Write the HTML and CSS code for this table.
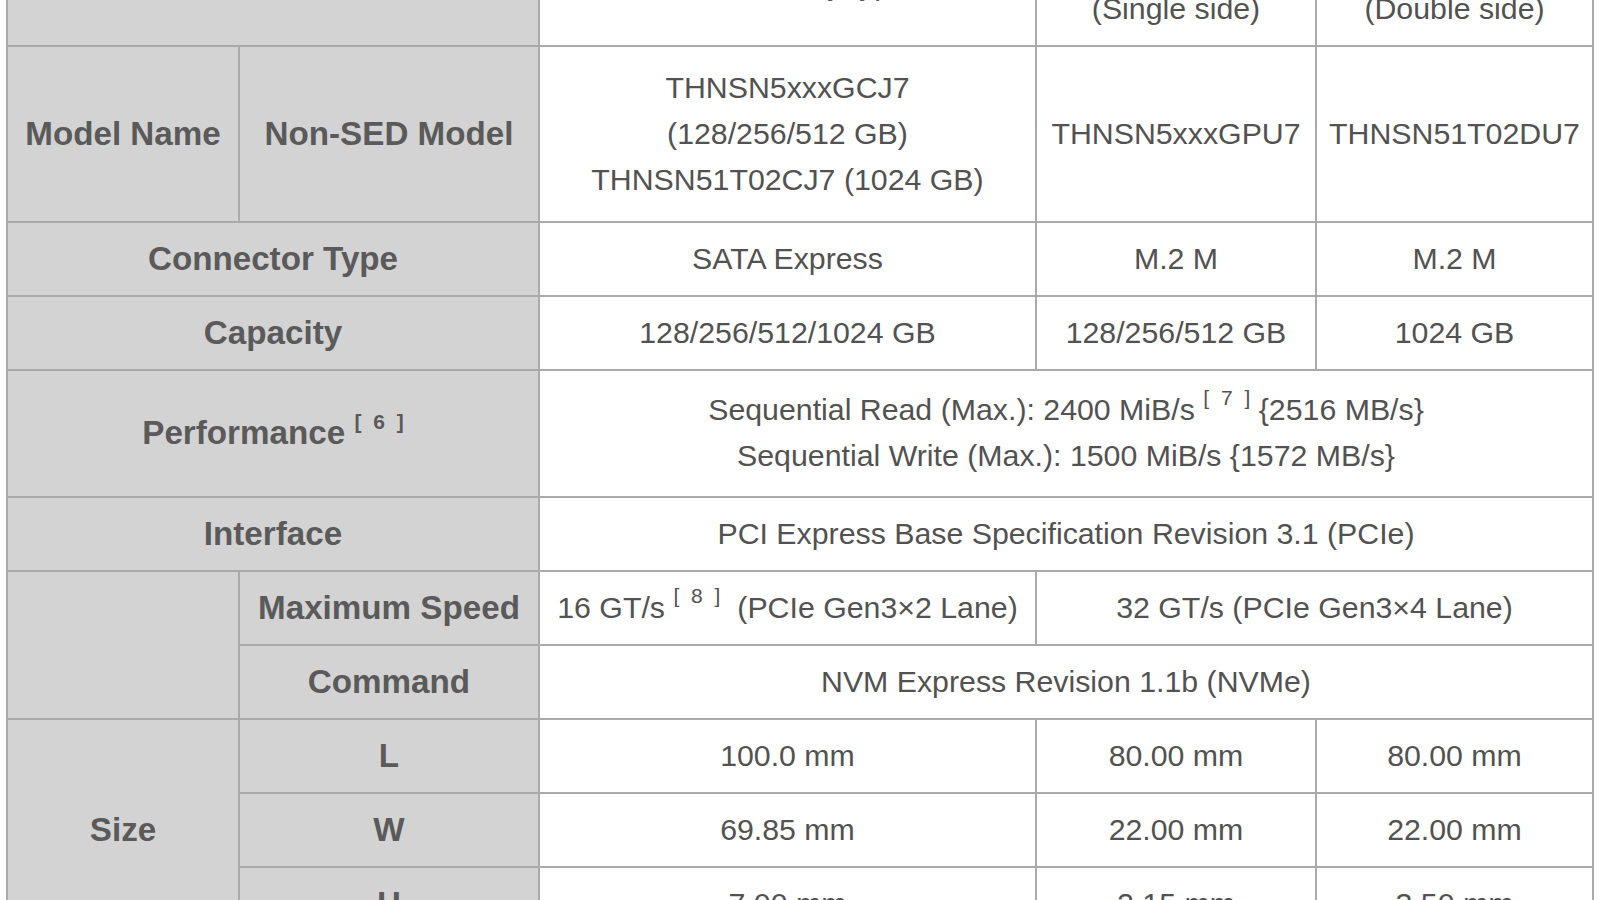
FILE: index.html
```html
<!DOCTYPE html>
<html lang="en">
<head>
<meta charset="utf-8">
<title>Specifications</title>
<link rel="stylesheet" href="styles.css">
</head>
<body>
<table class="spec">
  <colgroup>
    <col class="c1"><col class="c2"><col class="c3"><col class="c4"><col class="c5">
  </colgroup>
  <tr>
    <th colspan="2"></th>
    <td class="first">2.5-inch Tray type</td>
    <td>M.2 2280-S2<br>(Single side)</td>
    <td>M.2 2280-D2<br>(Double side)</td>
  </tr>
  <tr>
    <th>Model Name</th>
    <th>Non-SED Model</th>
    <td class="tall">THNSN5xxxGCJ7<br>(128/256/512 GB)<br>THNSN51T02CJ7 (1024 GB)</td>
    <td>THNSN5xxxGPU7</td>
    <td>THNSN51T02DU7</td>
  </tr>
  <tr>
    <th colspan="2">Connector Type</th>
    <td>SATA Express</td>
    <td>M.2 M</td>
    <td>M.2 M</td>
  </tr>
  <tr>
    <th colspan="2">Capacity</th>
    <td>128/256/512/1024 GB</td>
    <td>128/256/512 GB</td>
    <td>1024 GB</td>
  </tr>
  <tr>
    <th colspan="2" class="perf">Performance <sup>[ 6 ]</sup></th>
    <td colspan="3" class="perf">Sequential Read (Max.): 2400 MiB/s <sup>[ 7 ]</sup> {2516 MB/s}<br>Sequential Write (Max.): 1500 MiB/s {1572 MB/s}</td>
  </tr>
  <tr>
    <th colspan="2">Interface</th>
    <td colspan="3">PCI Express Base Specification Revision 3.1 (PCIe)</td>
  </tr>
  <tr>
    <th rowspan="2"></th>
    <th>Maximum Speed</th>
    <td>16 GT/s <sup>[ 8 ]</sup>&nbsp; (PCIe Gen3×2 Lane)</td>
    <td colspan="2">32 GT/s (PCIe Gen3×4 Lane)</td>
  </tr>
  <tr>
    <th>Command</th>
    <td colspan="3">NVM Express Revision 1.1b (NVMe)</td>
  </tr>
  <tr>
    <th rowspan="3">Size</th>
    <th>L</th>
    <td>100.0 mm</td>
    <td>80.00 mm</td>
    <td>80.00 mm</td>
  </tr>
  <tr>
    <th>W</th>
    <td>69.85 mm</td>
    <td>22.00 mm</td>
    <td>22.00 mm</td>
  </tr>
  <tr>
    <th>H</th>
    <td>7.00 mm</td>
    <td>2.15 mm</td>
    <td>3.50 mm</td>
  </tr>
</table>
</body>
</html>
```

FILE: styles.css
```css
html, body {
  margin: 0;
  padding: 0;
  background: #ffffff;
  overflow: hidden;
}

body {
  font-family: "Liberation Sans", Arial, sans-serif;
}

.spec {
  border-collapse: collapse;
  table-layout: fixed;
  width: 1588px;
  margin: -75px 0 0 6px;
}

.c1 { width: 232px; }
.c2 { width: 300px; }
.c3 { width: 497px; }
.c4 { width: 280px; }
.c5 { width: 277px; }

.spec th,
.spec td {
  border: 2px solid #aaaaaa;
  text-align: center;
  vertical-align: middle;
  padding: 13px 4px;
  line-height: 46px;
  white-space: nowrap;
}

.spec th {
  background: #d3d3d3;
  font-weight: bold;
  font-size: 33.2px;
  color: #5a5a5a;
}

.spec td {
  background: #ffffff;
  font-size: 30.3px;
  color: #525252;
}

.spec td.tall {
  padding-top: 18px;
  padding-bottom: 18px;
}

.spec .perf {
  padding-top: 16px;
  padding-bottom: 17px;
}

.spec td.first {
  vertical-align: bottom;
  padding-bottom: 37px;
}

.spec sup {
  font-size: 21px;
  line-height: 0;
  vertical-align: 15px;
  word-spacing: 6px;
}
```
